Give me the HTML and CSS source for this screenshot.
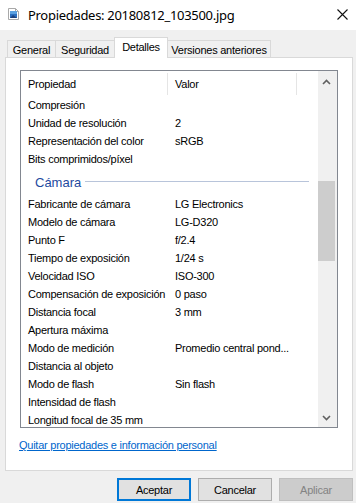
FILE: index.html
```html
<!DOCTYPE html>
<html lang="es">
<head>
<meta charset="utf-8">
<title>Propiedades</title>
<link rel="stylesheet" href="styles.css">
</head>
<body>
<div class="window">
  <div class="titlebar">
    <svg class="app-icon" width="11" height="12" viewBox="0 0 11 12">
      <path d="M0.5 0.5 H7.5 L10.5 3.5 V11.5 H0.5 Z" fill="#fff" stroke="#a9a9a9"/>
      <path d="M7.5 0.5 V3.5 H10.5" fill="none" stroke="#a9a9a9"/>
      <rect x="2" y="3" width="7" height="7" fill="#2a6fc0"/>
      <rect x="2" y="3" width="7" height="3" fill="#5aa0e0"/>
      <path d="M2 10 L5 7 L9 10 Z" fill="#1b3f7a"/>
    </svg>
    <span class="title">Propiedades: 20180812_103500.jpg</span>
    <svg class="close" width="11" height="11" viewBox="0 0 11 11">
      <path d="M0.5 0.5 L10.5 10.5 M10.5 0.5 L0.5 10.5" stroke="#111" stroke-width="1.1"/>
    </svg>
  </div>

  <div class="tabs">
    <div class="tab tab-general">General</div>
    <div class="tab tab-seg">Seguridad</div>
    <div class="tab tab-active">Detalles</div>
    <div class="tab tab-ver">Versiones anteriores</div>
  </div>

  <div class="panel">
    <div class="listbox">
      <div class="list-content">
        <div class="header">
          <div class="hcol hcol1">Propiedad</div>
          <div class="hcol hcol2">Valor</div>
        </div>
        <div class="row"><span class="k">Compresión</span><span class="v"></span></div>
        <div class="row"><span class="k">Unidad de resolución</span><span class="v">2</span></div>
        <div class="row"><span class="k">Representación del color</span><span class="v">sRGB</span></div>
        <div class="row"><span class="k">Bits comprimidos/píxel</span><span class="v"></span></div>
        <div class="group"><span class="group-label">Cámara</span><span class="group-line"></span></div>
        <div class="row"><span class="k">Fabricante de cámara</span><span class="v">LG Electronics</span></div>
        <div class="row"><span class="k">Modelo de cámara</span><span class="v">LG-D320</span></div>
        <div class="row"><span class="k">Punto F</span><span class="v">f/2.4</span></div>
        <div class="row"><span class="k">Tiempo de exposición</span><span class="v">1/24 s</span></div>
        <div class="row"><span class="k">Velocidad ISO</span><span class="v">ISO-300</span></div>
        <div class="row"><span class="k">Compensación de exposición</span><span class="v">0 paso</span></div>
        <div class="row"><span class="k">Distancia focal</span><span class="v">3 mm</span></div>
        <div class="row"><span class="k">Apertura máxima</span><span class="v"></span></div>
        <div class="row"><span class="k">Modo de medición</span><span class="v">Promedio central pond...</span></div>
        <div class="row"><span class="k">Distancia al objeto</span><span class="v"></span></div>
        <div class="row"><span class="k">Modo de flash</span><span class="v">Sin flash</span></div>
        <div class="row"><span class="k">Intensidad de flash</span><span class="v"></span></div>
        <div class="row"><span class="k">Longitud focal de 35 mm</span><span class="v"></span></div>
      </div>
      <div class="scrollbar">
        <svg class="arrow" width="9" height="6" viewBox="0 0 9 6"><path d="M1 5 L4.5 1.5 L8 5" fill="none" stroke="#606060" stroke-width="1.6"/></svg>
        <div class="track"><div class="thumb"></div></div>
        <svg class="arrow" width="9" height="6" viewBox="0 0 9 6"><path d="M1 1 L4.5 4.5 L8 1" fill="none" stroke="#606060" stroke-width="1.6"/></svg>
      </div>
    </div>
    <a class="link" href="#">Quitar propiedades e información personal</a>
  </div>

  <div class="buttons">
    <button class="btn btn-default">Aceptar</button>
    <button class="btn">Cancelar</button>
    <button class="btn btn-disabled" disabled>Aplicar</button>
  </div>
</div>
</body>
</html>
```

FILE: styles.css
```css
* { box-sizing: border-box; }

html, body {
  margin: 0;
  padding: 0;
}

body {
  width: 356px;
  height: 503px;
  background: #f0f0f0;
  font-family: "Liberation Sans", Arial, sans-serif;
  font-size: 11px;
  letter-spacing: -0.25px;
  color: #000;
  overflow: hidden;
}

.window {
  display: flex;
  flex-direction: column;
  height: 503px;
}

.titlebar {
  height: 30px;
  background: #fff;
  display: flex;
  align-items: center;
  padding-left: 8px;
  padding-right: 7px;
}

.app-icon {
  margin-top: -2px;
  flex: none;
}

.title {
  font-family: "Noto Sans", "Open Sans", sans-serif;
  font-size: 13px;
  letter-spacing: -0.3px;
  margin-left: 9px;
  color: #000;
  flex: 1;
}

.close {
  margin-top: -1px;
  margin-right: 1px;
}

.tabs {
  height: 27px;
  display: flex;
  align-items: flex-end;
  padding-left: 7px;
}

.tab {
  height: 17px;
  border: 1px solid #d9d9d9;
  border-bottom: none;
  background: #f0f0f0;
  display: flex;
  align-items: center;
  justify-content: center;
  padding-top: 1px;
  margin-left: -1px;
}

.tab-general { width: 49px; margin-left: 0; }
.tab-seg { width: 60px; }
.tab-active {
  width: 54px;
  height: 21px;
  background: #fff;
  padding-top: 0;
  padding-bottom: 3px;
  position: relative;
  z-index: 1;
  margin-bottom: -1px;
}
.tab-ver { width: 104px; }

.panel {
  margin-left: 5px;
  width: 348px;
  height: 414px;
  background: #fff;
  border: 1px solid #d9d9d9;
  padding: 12px 14px 0 14px;
  display: flex;
  flex-direction: column;
  align-items: flex-start;
}

.listbox {
  width: 318px;
  height: 358px;
  border: 1px solid #828790;
  display: flex;
  overflow: hidden;
}

.list-content {
  flex: 1;
  overflow: hidden;
}

.header {
  height: 24px;
  display: flex;
  align-items: center;
}

.hcol {
  height: 22px;
  margin-top: 1px;
  display: flex;
  align-items: center;
  border-right: 1px solid #e5e5e5;
  padding-left: 7px;
}
.hcol1 { width: 147px; }
.hcol2 { width: 129px; }

.row {
  height: 18px;
  display: flex;
  align-items: center;
  white-space: nowrap;
  padding-top: 1px;
}

.k {
  width: 147px;
  padding-left: 7px;
  flex: none;
}

.v {
  padding-left: 7px;
}

.group {
  height: 27px;
  display: flex;
  align-items: center;
  padding-left: 14px;
  padding-top: 4px;
}

.group-label {
  color: #1e4aa0;
  font-size: 13px;
  letter-spacing: 0;
}

.group-line {
  display: block;
  width: 224px;
  height: 1px;
  background: #b8c4da;
  margin-left: 4px;
  margin-top: -3px;
}

.scrollbar {
  width: 19px;
  flex: none;
  background: #f0f0f0;
  display: flex;
  flex-direction: column;
  align-items: flex-start;
}

.arrow {
  margin: 8px 0 0 4px;
  flex: none;
}

.scrollbar .arrow:last-child {
  margin: 0 0 6px 4px;
}

.track {
  flex: 1;
  width: 17px;
  padding-top: 96px;
}

.thumb {
  width: 17px;
  height: 80px;
  background: #cdcdcd;
}

.link {
  margin-top: 11px;
  color: #0066cc;
  text-decoration: underline;
  margin-left: -1px;
}

.buttons {
  display: flex;
  justify-content: flex-end;
  gap: 7px;
  margin-top: 7px;
  padding-right: 3px;
}

.btn {
  width: 74px;
  height: 23px;
  background: #e1e1e1;
  border: 1px solid #adadad;
  font-family: "Liberation Sans", Arial, sans-serif;
  font-size: 11px;
  letter-spacing: -0.25px;
  color: #000;
  padding: 0;
  border-radius: 0;
}

.btn-default {
  border: 2px solid #0078d7;
}

.btn-disabled {
  background: #cccccc;
  border-color: #bfbfbf;
  color: #838383;
}
```
